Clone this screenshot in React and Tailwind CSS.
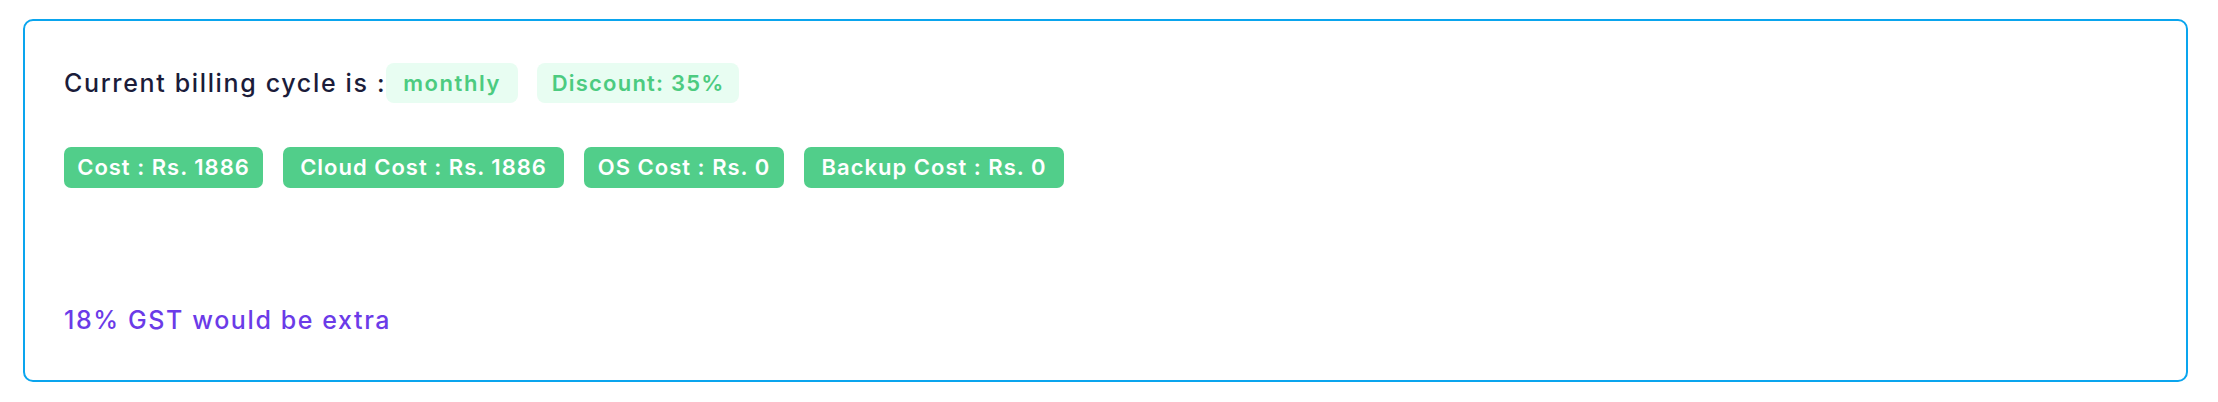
export default function App() {
  const badges = [
    { label: "Cost : Rs. 1886", w: "w-[199px]" },
    { label: "Cloud Cost : Rs. 1886", w: "w-[281px]" },
    { label: "OS Cost : Rs. 0", w: "w-[200px]" },
    { label: "Backup Cost : Rs. 0", w: "w-[260px]" },
  ];
  return (
    <div className="w-[2218px] h-[402px] bg-white pt-[19px] pl-[23px]" style={{ fontFamily: "Inter, 'Noto Sans', sans-serif" }}>
      <div className="w-[2165px] h-[363px] border-2 border-[#0aa5ee] rounded-[10px] pl-[39px] pt-[42px] flex flex-col">
        <div className="flex items-center h-[40px]">
          <span className="text-[25px] font-medium tracking-[1.65px] text-[#1b1c3a] leading-none">Current billing cycle is :</span>
          <span className="w-[132px] h-[40px] rounded-[8px] bg-[#e8fdf2] text-[#4ccb80] font-semibold text-[22px] tracking-[1.6px] flex items-center justify-center">monthly</span>
          <span className="ml-[19px] w-[202px] h-[40px] rounded-[8px] bg-[#e8fdf2] text-[#4ccb80] font-semibold text-[22px] tracking-[1.2px] flex items-center justify-center">Discount: 35%</span>
        </div>
        <div className="flex items-center gap-[20px] mt-[44px]">
          {badges.map((b) => (
            <span key={b.label} className={`${b.w} h-[41px] rounded-[7px] bg-[#51ce8a] text-white font-semibold text-[22px] tracking-[1px] flex items-center justify-center`}>
              {b.label}
            </span>
          ))}
        </div>
        <div className="mt-[116px] text-[25px] font-medium tracking-[1.6px] leading-[32px] text-[#6b3be8]">18% GST would be extra</div>
      </div>
    </div>
  );
}
